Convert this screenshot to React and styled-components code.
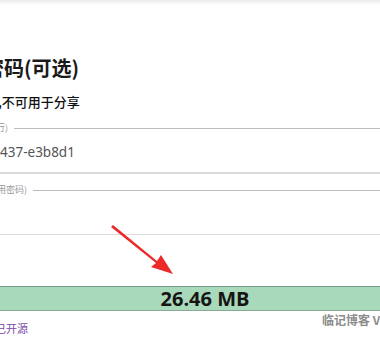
import React from "react";
import styled, { createGlobalStyle } from "styled-components";

const Global = createGlobalStyle`
  html, body { margin: 0; padding: 0; background: #fff; }
  body { width: 380px; height: 342px; overflow: hidden; font-family: "Noto Sans", "Noto Sans CJK SC", sans-serif; }
`;

const Page = styled.div`
  position: relative;
  width: 380px;
  height: 342px;
  overflow: hidden;
  display: flex;
  flex-direction: column;
`;

const TopShade = styled.div`
  height: 6px;
  background: linear-gradient(#ececec, #fafafa 60%, #fff);
`;

const Title = styled.h2`
  margin: 50px 0 0 ${(p) => p.$shift}px;
  font: 700 20px/24px "Noto Sans CJK SC", sans-serif;
  color: #1a1a1a;
  white-space: nowrap;
`;

const Hint = styled.p`
  margin: 13px 0 0 ${(p) => p.$shift}px;
  font: 500 13px/18px "Noto Sans CJK SC", sans-serif;
  color: #111;
  white-space: nowrap;
`;

const Field = styled.div`
  display: flex;
  flex-direction: column;
  margin-top: ${(p) => p.$top}px;
  border-bottom: ${(p) => p.$bottom};
  height: ${(p) => p.$h}px;
  box-sizing: content-box;
`;

const LegendRow = styled.div`
  display: flex;
  align-items: center;
  height: 10px;
  gap: 6px;
`;

const Legend = styled.span`
  margin-left: ${(p) => p.$shift}px;
  font: 400 9px/10px "Noto Sans CJK SC", sans-serif;
  color: #9a9a9a;
  white-space: nowrap;
`;

const LegendLine = styled.div`
  flex: 1;
  height: 1px;
  background: #bdbdbd;
`;

const Value = styled.div`
  margin-top: 9px;
  font: 400 13.5px/20px "Noto Sans", sans-serif;
  color: #555;
  white-space: nowrap;
`;

const SizeBar = styled.div`
  margin-top: 51px;
  height: 23px;
  background: #a9d9bb;
  border-top: 1px solid #7d9a88;
  border-bottom: 1px solid #8aa896;
  display: flex;
  align-items: center;
  justify-content: center;
  padding-left: 30px;
  font: 700 20px/23px "Open Sans", sans-serif;
  color: #151515;
`;

const Footer = styled.div`
  margin-top: 10px;
  font: 400 11px/14px "Noto Sans CJK SC", sans-serif;
  color: #7a4aa8;
  white-space: nowrap;
  margin-left: ${(p) => p.$shift}px;
`;

const Watermark = styled.div`
  position: absolute;
  left: 322px;
  top: 312px;
  font: 700 12px/16px "Noto Sans CJK SC", sans-serif;
  color: #8c8c8c;
  white-space: nowrap;
`;

const Arrow = styled.svg`
  position: absolute;
  left: 100px;
  top: 220px;
`;

export default function App() {
  return (
    <>
      <Global />
      <Page>
        <TopShade />
        <Title $shift={-56}>设置密码(可选)</Title>
        <Hint $shift={-67}>仅本地加密,不可用于分享</Hint>
        <Field $top={12} $bottom="2px solid #dadada" $h={49}>
          <LegendRow>
            <Legend $shift={-52}>密码(本地运行)</Legend>
            <LegendLine />
          </LegendRow>
          <Value>437-e3b8d1</Value>
        </Field>
        <Field $top={11} $bottom="1px solid #dcdcdc" $h={49}>
          <LegendRow>
            <Legend $shift={-51}>(留空则不使用密码)</Legend>
            <LegendLine />
          </LegendRow>
        </Field>
        <SizeBar>26.46 MB</SizeBar>
        <Footer $shift={-27}>代码已开源</Footer>
        <Watermark>临记博客 V</Watermark>
        <Arrow width="80" height="60" viewBox="0 0 80 60">
          <path d="M11 7 L13 5 L57 41 L61 35 L73 54 L51 47 L56 43 Z" fill="#ec2a2a" />
        </Arrow>
      </Page>
    </>
  );
}
